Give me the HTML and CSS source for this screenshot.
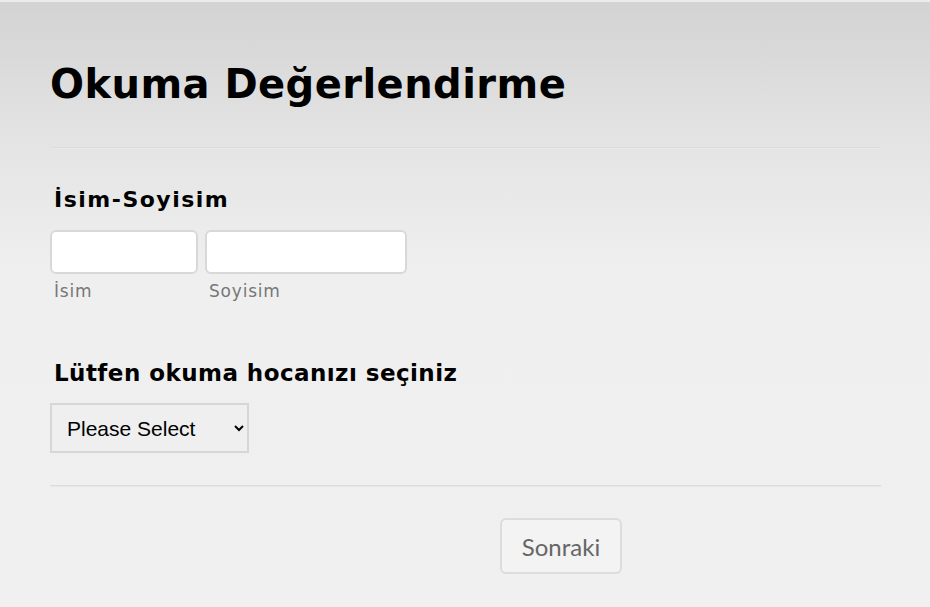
FILE: index.html
```html
<!DOCTYPE html>
<html lang="tr">
<head>
    <meta charset="UTF-8">
    <title>Okuma Değerlendirme</title>
    <link rel="stylesheet" href="styles.css">
</head>
<body>
<div class="form">
    <div class="header">
        <h1>Okuma Değerlendirme</h1>
    </div>
    <div class="line"></div>
    <div class="field">
        <label class="label">İsim-Soyisim</label>
        <div class="names">
            <div class="name first">
                <input type="text">
                <span class="sub">İsim</span>
            </div>
            <div class="name last">
                <input type="text">
                <span class="sub">Soyisim</span>
            </div>
        </div>
    </div>
    <div class="field teacher">
        <label class="label">Lütfen okuma hocanızı seçiniz</label>
        <select>
            <option>Please Select</option>
        </select>
    </div>
    <div class="line bottom"></div>
    <div class="buttons">
        <button>Sonraki</button>
    </div>
</div>
</body>
</html>
```

FILE: styles.css
```css
* {
    padding: 0;
    margin: 0;
    box-sizing: border-box;
}

body {
    background: #f0f0f0;
    font-family: "DejaVu Sans", Verdana, sans-serif;
    height: 607px;
    overflow: hidden;
}

.form {
    background: linear-gradient(#d3d3d3 0, #e4e4e4 140px, #efefef 270px, #f0f0f0 100%);
    border-top: 2px solid #ececec;
    height: 607px;
    padding: 0 49px 0 50px;
}

.header {
    padding-top: 57px;
    height: 145px;
}

h1 {
    font-size: 40px;
    font-weight: bold;
    color: #000;
    line-height: 50px;
    letter-spacing: 0.45px;
}

.line {
    height: 2px;
    background: #dcdcdc;
    border-bottom: 1px solid #e8e8e8;
}

.field {
    padding-top: 37px;
}

.label {
    display: block;
    font-size: 22px;
    font-weight: bold;
    color: #000;
    padding-left: 4px;
    line-height: 28px;
    letter-spacing: 1.5px;
}

.names {
    display: flex;
    gap: 7px;
    margin-top: 16px;
}

.name {
    display: flex;
    flex-direction: column;
}

.name input {
    height: 44px;
    border: 2px solid #d8d8d8;
    border-radius: 6px;
    background: #fff;
}

.first input {
    width: 148px;
}

.last input {
    width: 202px;
}

.sub {
    font-size: 17px;
    color: #777;
    padding-left: 4px;
    margin-top: 6px;
    line-height: 22px;
    letter-spacing: 0.8px;
}

.teacher {
    padding-top: 57px;
}

.teacher .label {
    font-size: 23px;
    letter-spacing: 0.45px;
}

select {
    display: block;
    margin-top: 16px;
    width: 199px;
    height: 50px;
    border: 2px solid #d6d6d6;
    background: #efefef;
    font-family: "Liberation Sans", Arial, sans-serif;
    font-size: 21px;
    color: #000;
    padding-left: 11px;
}

.bottom {
    margin-top: 32px;
}

.buttons {
    padding-top: 31px;
    padding-left: 450px;
}

button {
    width: 122px;
    height: 56px;
    border: 2px solid #dcdcdc;
    border-radius: 6px;
    background: #f3f3f3;
    font-family: Lato, sans-serif;
    font-size: 24px;
    color: #666;
}
```
